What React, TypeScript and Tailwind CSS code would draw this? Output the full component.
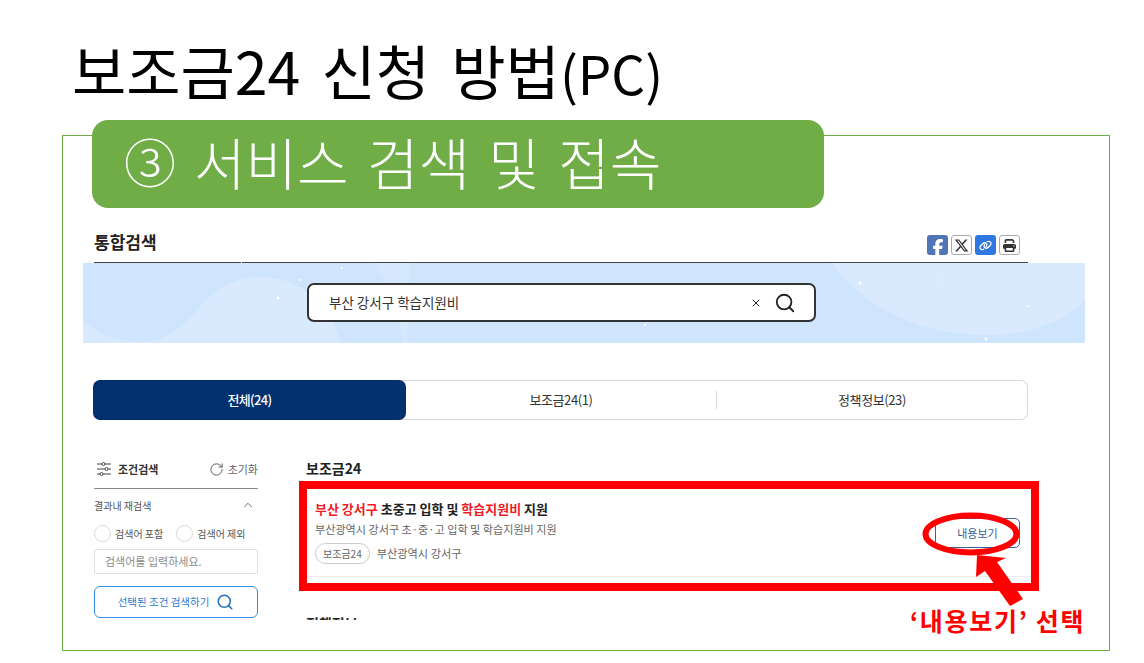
import { ChevronUp, RotateCw, Search, X } from 'lucide-react';
import { FaFacebookF, FaLink, FaPrint, FaXTwitter } from 'react-icons/fa6';

function ShareButtons() {
  return (
    <div className="flex items-center gap-[3px] mb-[7px] mr-[8px]">
      <span className="w-[21px] h-[20px] rounded-[3px] bg-[#4f74b8] flex items-end justify-center text-white overflow-hidden">
        <FaFacebookF className="w-[16px] h-[17px] -mb-px" />
      </span>
      <span className="w-[21px] h-[20px] rounded-[3px] border border-[#aaaaaa] bg-white flex items-center justify-center text-[#333333]">
        <FaXTwitter className="w-[15px] h-[15px]" />
      </span>
      <span className="w-[21px] h-[20px] rounded-[3px] bg-[#2f78e4] flex items-center justify-center text-white">
        <FaLink className="w-[13px] h-[13px]" />
      </span>
      <span className="w-[21px] h-[20px] rounded-[3px] border border-[#aaaaaa] bg-white flex items-center justify-center text-[#333333]">
        <FaPrint className="w-[13px] h-[13px]" />
      </span>
    </div>
  );
}

function FilterIcon() {
  return (
    <svg className="ml-[2px] mr-[6px]" width="16" height="16" viewBox="0 0 16 16" fill="none" stroke="#444444" strokeWidth="1">
      <path d="M1 3H6M9 3H15M1 8H9M12 8H15M1 13H4M7 13H15" />
      <circle cx="7.5" cy="3" r="1.5" />
      <circle cx="10.5" cy="8" r="1.5" />
      <circle cx="5.5" cy="13" r="1.5" />
    </svg>
  );
}

function SearchBanner() {
  return (
    <div className="relative -ml-[11px] w-[1002px] h-[80px] bg-[#cfe5fe] overflow-hidden pl-[224px] pt-[20px]">
      <svg className="absolute inset-0" width="1002" height="80" viewBox="0 0 1002 80">
        <path d="M0 59 C15 70 35 79 57 79 C80 79 97 68 120 40 C135 25 155 14 179 14 C205 14 232 30 245 50 C250 60 254 70 258 80 L0 80 Z" fill="#d9eafe" />
        <path d="M290 0 C305 20 316 50 320 80 L324 80 C326 50 328 25 327 0 Z" fill="#d5e8fe" />
        <path d="M748 0 C785 48 840 72 905 72 C945 72 980 60 1002 37 L1002 0 Z" fill="#d9eafe" />
        <g fill="#ffffff">
          <circle cx="195" cy="35" r="1.5" />
          <circle cx="217" cy="17" r="1" />
          <circle cx="259" cy="5" r="1" />
          <circle cx="562" cy="62" r="1" />
          <circle cx="777" cy="20" r="1.5" />
          <circle cx="722" cy="41" r="1.5" />
          <circle cx="903" cy="76" r="1.5" />
          <circle cx="945" cy="43" r="1" />
          <circle cx="860" cy="17" r="0.7" />
        </g>
      </svg>
      <div className="relative w-[509px] h-[39px] rounded-[7px] border-2 border-[#333333] bg-white flex items-center pl-[20px] pr-[18px]">
        <span className="flex-1 text-[13.5px] text-[#333333]">부산 강서구 학습지원비</span>
        <X className="w-[12px] h-[12px] text-[#222222] mr-[12px]" strokeWidth={2} />
        <Search className="w-[22px] h-[22px] text-[#222222]" strokeWidth={2} />
      </div>
    </div>
  );
}

function Tabs() {
  return (
    <div className="mt-[37px] h-[40px] rounded-[7px] border border-[#d8d8d8] flex text-[13px] text-[#333333] tracking-[-0.4px]">
      <div className="-my-px -ml-[2px] w-[313px] rounded-[7px] bg-[#03306f] text-white font-medium tracking-[-0.7px] flex items-center justify-center">전체(24)</div>
      <div className="w-[310px] flex items-center justify-center">보조금24(1)</div>
      <div className="my-[10px] w-px bg-[#d8d8d8]" />
      <div className="flex-1 flex items-center justify-center">정책정보(23)</div>
    </div>
  );
}

function Sidebar() {
  return (
    <aside className="w-[164px] shrink-0">
      <div className="h-[20px] flex items-center text-[#333333]">
        <FilterIcon />
        <span className="flex-1 text-[11px] font-bold">조건검색</span>
        <RotateCw className="w-[15px] h-[15px] text-[#555555] mr-[4px]" strokeWidth={1.5} />
        <span className="text-[11px] text-[#666666]">초기화</span>
      </div>
      <div className="h-[10px] border-b border-[#888888]" />
      <div className="mt-[8px] h-[16px] flex items-center justify-between text-[#555555]">
        <span className="text-[10px]">결과내 재검색</span>
        <ChevronUp className="w-[14px] h-[14px] mr-[3px]" strokeWidth={1.5} />
      </div>
      <div className="mt-[11px] h-[18px] flex items-center text-[10px] text-[#555555]">
        <span className="w-[17px] h-[17px] rounded-full border border-[#d8d8d8] mr-[4px]" />
        <span className="mr-[13px]">검색어 포함</span>
        <span className="w-[17px] h-[17px] rounded-full border border-[#d8d8d8] mr-[4px]" />
        <span>검색어 제외</span>
      </div>
      <div className="mt-[7px] h-[25px] rounded-[3px] border border-[#dddddd] flex items-center pl-[10px] text-[11px] text-[#8a8a8a]">
        검색어를 입력하세요.
      </div>
      <div className="mt-[12px] h-[32px] rounded-[6px] border border-[#3a8ee6] flex items-center justify-center text-[10.5px] text-[#2b7bd4]">
        선택된 조건 검색하기
        <Search className="w-[18px] h-[18px] ml-[7px] text-[#1f6fc4]" strokeWidth={2} />
      </div>
    </aside>
  );
}

function ResultCard() {
  return (
    <div className="mt-[4px] -ml-[7px] -mr-[11px] h-[110px] border-[8px] border-[#ff0000]">
      <div className="h-[88px] border-b border-[#eeeeee] flex">
        <div className="flex-1 pl-[8px] pt-[12px]">
          <p className="text-[13px] font-bold text-[#222222] leading-[16px]">
            <span className="text-[#ee1c25]">부산 강서구</span> 초중고 입학 및 <span className="text-[#ee1c25]">학습지원비</span> 지원
          </p>
          <p className="mt-[5px] text-[11.1px] text-[#666666] leading-[14px]">부산광역시 강서구 초·중·고 입학 및 학습지원비 지원</p>
          <div className="mt-[7px] flex items-center">
            <span className="h-[21px] px-[7px] rounded-full border border-[#cccccc] flex items-center text-[10px] text-[#666666]">보조금24</span>
            <span className="ml-[7px] text-[11.2px] text-[#666666]">부산광역시 강서구</span>
          </div>
        </div>
        <div className="mt-[29px] mr-[11px] w-[85px] h-[30px] rounded-[5px] border border-[#3b5f9e] flex items-center justify-center text-[11px] text-[#3b5f8e]">
          내용보기
        </div>
      </div>
    </div>
  );
}

export default function App() {
  return (
    <div className="w-[1144px] h-[663px] bg-white overflow-hidden font-['Noto_Sans_CJK_KR','Noto_Sans',sans-serif]">
      <h1 className="h-[135px] pl-[72px] pt-[25px] text-[59px] leading-[90px] text-black [word-spacing:8px]">
        보조금24 신청 방법<span className="text-[53px]">(PC)</span>
      </h1>

      <div className="relative ml-[62px] w-[1048px] h-[516px] border border-[#70ad47]">
        {/* slide title badge sits over the frame edge */}
        <div className="absolute left-[29px] -top-[16px] w-[732px] h-[88px] rounded-[16px] bg-[#70ad47] pl-[32px] pb-[6px] flex items-center text-white text-[56px] font-light [word-spacing:6px]">
          <span className="text-[52px]">③</span>
          <span className="ml-[18px]">서비스 검색 및 접속</span>
        </div>

        <div className="ml-[31px] w-[934px] h-[484px] pt-[94px] overflow-y-clip overflow-x-visible">
          <div className="relative h-[33px] border-b border-[#444444] flex items-end justify-between">
            <h2 className="text-[17px] font-bold text-[#222222] mb-[10px] leading-[20px]">통합검색</h2>
            <ShareButtons />
            <span className="absolute left-[147px] -bottom-px w-px h-px bg-white" />
          </div>
          <SearchBanner />
          <Tabs />
          <div className="mt-[39px] flex gap-[48px]">
            <Sidebar />
            <main className="flex-1">
              <h3 className="h-[18px] text-[14px] font-bold text-[#222222] leading-[18px]">보조금24</h3>
              <ResultCard />
              <h3 className="mt-[23px] text-[14px] font-bold text-[#222222] leading-[18px]">정책정보</h3>
            </main>
          </div>
        </div>

        {/* annotation over the screenshot: ring and arrow on the button */}
        <svg className="absolute left-[840px] top-[360px]" width="200" height="120" viewBox="0 0 200 120">
          <ellipse cx="68" cy="38" rx="45.5" ry="18.5" fill="none" stroke="#ff0000" strokeWidth="6" />
          <path d="M74 59 L73 81 L82 75 L107 110 L120 103 L94 66 L103 62 Z" fill="#ff0000" />
        </svg>
        <p className="absolute left-[847px] top-[469px] text-[25px] leading-[30px] font-bold text-[#ff0000] tracking-[1.7px] whitespace-nowrap">‘내용보기’ 선택</p>
      </div>
    </div>
  );
}
